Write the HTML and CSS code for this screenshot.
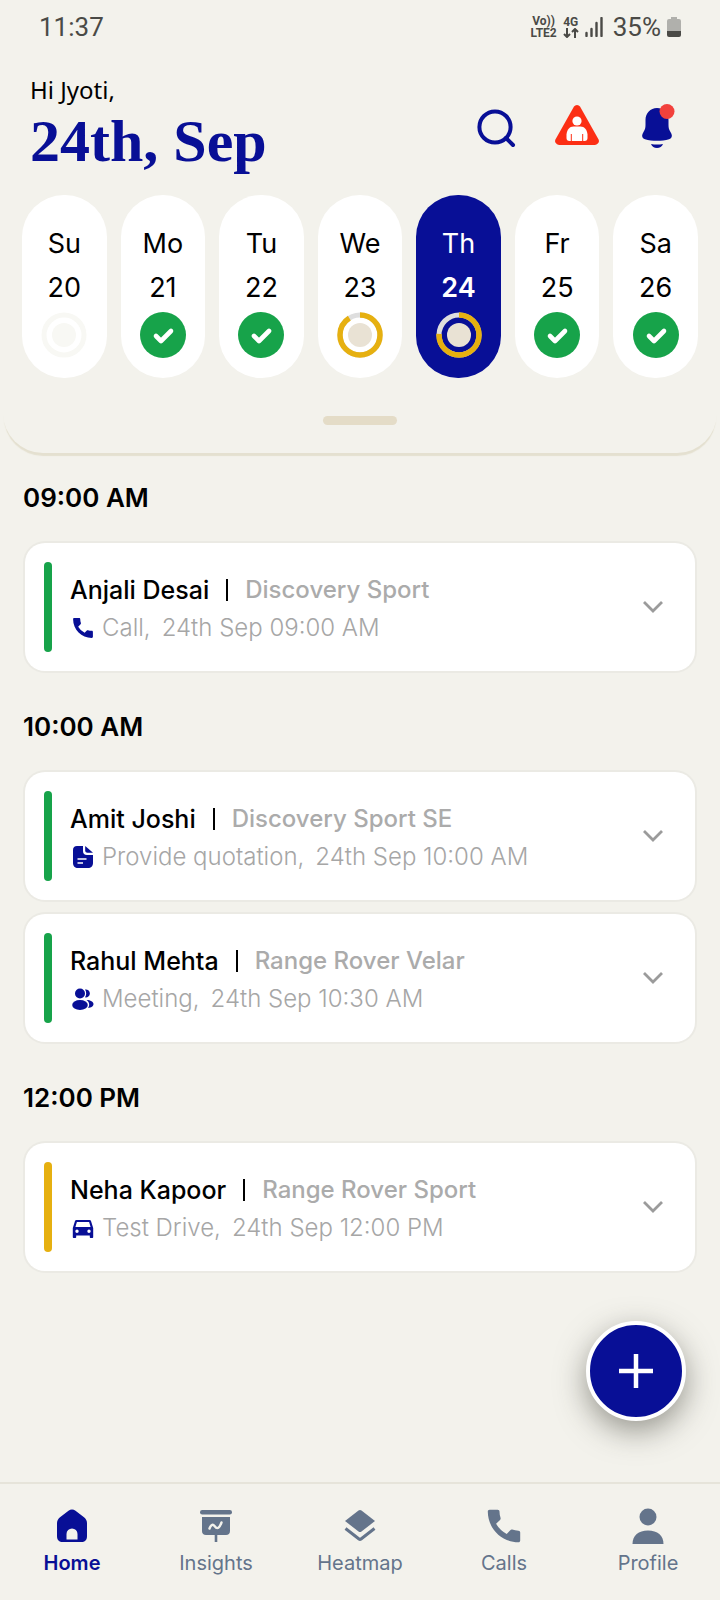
FILE: index.html
```
<!DOCTYPE html>
<html lang="en">
<head>
	<meta charset="UTF-8">
	<meta name="viewport" content="width=device-width, initial-scale=1.0">
	<title>Schedule</title>
	<link rel="stylesheet" href="styles.css">
</head>
<body>
	<svg width="0" height="0" class="sprite" aria-hidden="true">
		<symbol id="phone" viewBox="2 2 20 20"><path d="M3 4c0-.6.4-1 1-1h4.500c.6 0 1 .4 1 1 0 1.200.2 2.400.6 3.500.1.400 0 .8-.3 1.100L7.600 10.800a15 15 0 0 0 5.900 5.600l2-2.100c.3-.3.7-.4 1-.3 1.100.4 2.300.6 3.500.6.6 0 1 .4 1 1V20c0 .6-.4 1-1 1C10.600 21 3 13.400 3 4z"/></symbol>
		<symbol id="check" viewBox="0 0 46 46"><circle cx="23" cy="23" r="23"/><path d="M16 24l5 5 10-10" fill="none" stroke="#fff" stroke-width="4.600" stroke-linecap="round" stroke-linejoin="round"/></symbol>
		<symbol id="chevron" viewBox="0 0 20 12"><path d="M1 1l9 9 9-9" fill="none" stroke="currentColor" stroke-width="2.800"/></symbol>
	</svg>

	<header class="top">
		<div class="status-bar">
			<span class="clock">11:37</span>
			<div class="status-icons">
				<div class="stack"><span>Vo))</span><span>LTE2</span></div>
				<div class="stack">
					<span>4G</span>
					<svg width="16" height="10" viewBox="0 0 16 10"><path d="M4 0v9M1 6l3 3 3-3M12 10V1M9 4l3-3 3 3" fill="none" stroke="currentColor" stroke-width="2"/></svg>
				</div>
				<svg width="18" height="20" viewBox="0 0 18 20"><path d="M1.500 16v3M6.500 12v7M11.500 6v13M16.500 1v18" stroke="currentColor" stroke-width="2.400" stroke-linecap="round"/></svg>
				<span class="battery-text">35%</span>
				<svg width="14" height="20" viewBox="0 0 14 20"><path d="M4 0h6v2h2a2 2 0 0 1 2 2v10H0V4a2 2 0 0 1 2-2h2z" fill="#b0b0ac"/><path d="M0 14h14v4a2 2 0 0 1-2 2H2a2 2 0 0 1-2-2z" fill="#4a4a46"/></svg>
			</div>
		</div>

		<div class="greeting-row">
			<div>
				<p class="greeting">Hi Jyoti,</p>
				<h1>24th, Sep</h1>
			</div>
			<div class="actions">
				<button type="button" aria-label="Search">
					<svg width="44" height="44" viewBox="0 0 44 44"><g fill="none" stroke="#080f96" stroke-width="4" stroke-linecap="round"><circle cx="21" cy="23" r="15.600"/><path d="M32 34l7 7"/></g></svg>
				</button>
				<button type="button" aria-label="Emergency">
					<svg width="44" height="44" viewBox="0 0 44 44"><path d="M19 2.500a3.600 3.600 0 0 1 6 0L43 34.500a4 4 0 0 1-3.400 6.500H4.400A4 4 0 0 1 1 34.500z" fill="#fc2f14"/><g fill="#fff"><circle cx="22" cy="17" r="4.600"/><path d="M18.500 22.500h7c4 0 6.500 3 7 8v3.500c0 2-1 3-3 3h-15c-2 0-3-1-3-3v-3.500c.5-5 3-8 7-8z"/></g><path d="M16.300 30v7M27.700 30v7" stroke="#fc2f14" stroke-width="1"/></svg>
				</button>
				<button type="button" aria-label="Notifications">
					<svg width="44" height="44" viewBox="0 0 44 44"><g fill="#080f96"><path d="M21 4c6.600 0 11.500 5 11.500 12v5c0 3 .5 4.500 2 7l1 2c1 2.400 0 4.500-2.500 5.200-7 2-17 2-24 0C6.500 34.500 5.500 32.400 6.500 30l1-2c1.500-2.500 2-4 2-7v-5C9.500 9 14.400 4 21 4z"/><path d="M15 40c4 .7 8 .7 12 0-1 2.500-3.200 4-6 4s-5-1.500-6-4z"/></g><circle cx="31" cy="7.500" r="7.500" fill="#f2413c"/></svg>
				</button>
			</div>
		</div>

		<div class="week">
			<button type="button" class="day"><span>Su</span><span>20</span>
				<svg class="ring" viewBox="0 0 46 46"><circle cx="23" cy="23" r="20" fill="none" stroke="#f8f8f4" stroke-width="5"/><circle cx="23" cy="23" r="12" fill="#f8f8f4"/></svg>
			</button>
			<button type="button" class="day"><span>Mo</span><span>21</span><svg class="ring done"><use href="#check"/></svg></button>
			<button type="button" class="day"><span>Tu</span><span>22</span><svg class="ring done"><use href="#check"/></svg></button>
			<button type="button" class="day"><span>We</span><span>23</span>
				<svg class="ring" viewBox="0 0 46 46"><circle cx="23" cy="23" r="20" fill="none" stroke="#dedede" stroke-width="5"/><circle cx="23" cy="23" r="20" fill="none" stroke="#e6b010" stroke-width="5.500" pathLength="100" stroke-dasharray="91 9" transform="rotate(-90 23 23)"/><circle cx="23" cy="23" r="12" fill="#e9e2d4"/></svg>
			</button>
			<button type="button" class="day active" aria-current="date"><span>Th</span><span>24</span>
				<svg class="ring" viewBox="0 0 46 46"><circle cx="23" cy="23" r="20" fill="none" stroke="#dedede" stroke-width="5"/><circle cx="23" cy="23" r="20" fill="none" stroke="#e6b010" stroke-width="5.500" pathLength="100" stroke-dasharray="76 24" transform="rotate(-90 23 23)"/><circle cx="23" cy="23" r="12" fill="#e9e2d4"/></svg>
			</button>
			<button type="button" class="day"><span>Fr</span><span>25</span><svg class="ring done"><use href="#check"/></svg></button>
			<button type="button" class="day"><span>Sa</span><span>26</span><svg class="ring done"><use href="#check"/></svg></button>
		</div>
		<div class="handle"></div>
	</header>

	<main>
		<section>
			<h2>09:00 AM</h2>
			<article class="card">
				<div class="info">
					<h3>Anjali Desai <i></i> <span>Discovery Sport</span></h3>
					<p><svg width="24" height="24" viewBox="0 0 24 24"><use href="#phone" x="1" y="1" width="22" height="22"/></svg>Call, <time>24th Sep 09:00 AM</time></p>
				</div>
				<button type="button" aria-label="Expand"><svg width="20" height="12"><use href="#chevron"/></svg></button>
			</article>
		</section>

		<section>
			<h2>10:00 AM</h2>
			<article class="card">
				<div class="info">
					<h3>Amit Joshi <i></i> <span>Discovery Sport SE</span></h3>
					<p><svg width="24" height="24" viewBox="0 0 24 24"><path d="M6 1h6v5a4 4 0 0 0 4 4h6v8c0 3-2 5-5 5H7c-3 0-5-2-5-5V5c0-2.500 1.500-4 4-4z"/><path d="M14.200 1L22 7.800h-5.500c-1.300 0-2.300-1-2.300-2.300z"/><path d="M6.500 14h9M6.500 18h5.500" stroke="#fff" stroke-width="1.600"/></svg>Provide quotation, <time>24th Sep 10:00 AM</time></p>
				</div>
				<button type="button" aria-label="Expand"><svg width="20" height="12"><use href="#chevron"/></svg></button>
			</article>
			<article class="card">
				<div class="info">
					<h3>Rahul Mehta <i></i> <span>Range Rover Velar</span></h3>
					<p><svg width="24" height="24" viewBox="0 0 24 24"><circle cx="9" cy="6.500" r="5"/><ellipse cx="9" cy="18" rx="7.800" ry="5"/><path d="M14 2.500a4 4 0 1 1 0 7.800c1.600-2.200 1.600-5.600 0-7.800zM15.500 13c4 0 7 1.800 7 4s-2.300 3.800-5.500 4c2-2.600 1.500-5.800-1.500-8z"/></svg>Meeting, <time>24th Sep 10:30 AM</time></p>
				</div>
				<button type="button" aria-label="Expand"><svg width="20" height="12"><use href="#chevron"/></svg></button>
			</article>
		</section>

		<section>
			<h2>12:00 PM</h2>
			<article class="card pending">
				<div class="info">
					<h3>Neha Kapoor <i></i> <span>Range Rover Sport</span></h3>
					<p><svg width="24" height="24" viewBox="0 0 24 24"><path fill-rule="evenodd" d="M5.500 4h13c.8 0 1.300.4 1.500 1l2.200 7v9c0 .6-.4 1-1 1h-1.400c-.6 0-1-.4-1-1v-1.600H5.200V21c0 .6-.4 1-1 1H2.800c-.6 0-1-.4-1-1v-9L4 5c.2-.6.700-1 1.500-1zm.4 2L4.400 11h15.200L18.100 6zM6 13.500a1.700 1.700 0 1 0 0 3.400 1.700 1.700 0 0 0 0-3.400zm12 0a1.700 1.700 0 1 0 0 3.400 1.700 1.700 0 0 0 0-3.400z"/></svg>Test Drive, <time>24th Sep 12:00 PM</time></p>
				</div>
				<button type="button" aria-label="Expand"><svg width="20" height="12"><use href="#chevron"/></svg></button>
			</article>
		</section>
	</main>

	<button type="button" class="fab" aria-label="Add">
		<svg width="34" height="34" viewBox="0 0 34 34"><path d="M17 0v34M0 17h34" stroke="#fff" stroke-width="4.500"/></svg>
	</button>

	<nav class="bottom-nav">
		<a href="#" class="current">
			<svg width="36" height="36" viewBox="0 0 36 36"><path fill-rule="evenodd" d="M14.500 2.800c2.200-1.700 4.800-1.700 7 0l8.500 6.500c2 1.600 3 3.500 3 6V28c0 4-2 6-6 6H9c-4 0-6-2-6-6V15.300c0-2.500 1-4.400 3-6zM12.500 31.500h11V26a5.500 5.500 0 0 0-11 0z"/></svg>
			Home
		</a>
		<a href="#">
			<svg width="36" height="36" viewBox="0 0 36 36"><rect x="2" y="2" width="32" height="4.500" rx="2.200"/><path d="M4 9h28v14c0 2.500-1.500 4-4 4H8c-2.500 0-4-1.500-4-4z"/><path d="M18 26v8" stroke="currentColor" stroke-width="2.600"/><path d="M11.500 20.500c1-3 3-5 5-2.500 3 4 5 2 7-3.500" fill="none" stroke="#f3f2ec" stroke-width="2.400" stroke-linecap="round"/></svg>
			Insights
		</a>
		<a href="#">
			<svg width="36" height="36" viewBox="0 0 36 36"><path d="M16.500 2.500q1.500-1 3 0L33 13 19.500 23.500q-1.500 1-3 0L3 13z"/><path d="M3.500 20.500l13.500 10.500q1 .8 2 0l13.500-10.500" fill="none" stroke="currentColor" stroke-width="3"/></svg>
			Heatmap
		</a>
		<a href="#">
			<svg width="36" height="36"><use href="#phone"/></svg>
			Calls
		</a>
		<a href="#">
			<svg width="36" height="36" viewBox="0 0 36 36"><circle cx="18" cy="9" r="8.500"/><path d="M2.500 36c0-8.500 6-13.500 15.500-13.500S33.500 27.500 33.500 36z"/></svg>
			Profile
		</a>
	</nav>
</body>
</html>
```
FILE: styles.css
```
* {
	margin: 0;
	padding: 0;
	box-sizing: border-box;
}

body {
	min-height: 100vh;
	display: flex;
	flex-direction: column;
	background: #f3f2ec;
	color: #000;
	font-family: Inter, Roboto, "Liberation Sans", sans-serif;
}

button {
	border: none;
	background: none;
	font: inherit;
	color: inherit;
	cursor: pointer;
}

svg {
	display: block;
	flex-shrink: 0;
}

.sprite {
	position: absolute;
}

.top {
	margin: 0 3px;
	padding: 0 19px 28px;
	border-radius: 0 0 40px 40px;
	box-shadow: 0 4px 1px -1px #e4e0d0;
}

/* status bar */
.status-bar {
	height: 54px;
	padding: 0 17px;
	display: flex;
	justify-content: space-between;
	align-items: center;
	font-family: Roboto, sans-serif;
	font-size: 26px;
	font-weight: 400;
	color: #4a4a46;
}

.status-icons {
	display: flex;
	align-items: center;
	gap: 6px;
}

.stack {
	display: flex;
	flex-direction: column;
	align-items: center;
	font-size: 12px;
	line-height: 12px;
	font-weight: 700;
}

.battery-text {
	margin-left: 4px;
}

/* greeting */
.greeting-row {
	padding: 22px 18px 0 8px;
	display: flex;
	justify-content: space-between;
}

.greeting {
	font-family: "Noto Sans", sans-serif;
	font-size: 24px;
	line-height: 28px;
}

h1 {
	font-family: "Liberation Serif", serif;
	font-size: 60px;
	line-height: 74px;
	font-weight: 700;
	color: #080f96;
}

.actions {
	display: flex;
	gap: 37px;
	padding-top: 28px;
}

.actions button {
	height: 44px;
}

/* week strip */
.week {
	padding-top: 17px;
	display: grid;
	grid-template-columns: repeat(7, 1fr);
	gap: 14px;
}

.day {
	padding: 27px 0 20px;
	display: flex;
	flex-direction: column;
	align-items: center;
	border-radius: 42px;
	background: #fff;
	font-size: 27px;
	line-height: 44px;
}

.day.active {
	background: #080f96;
	color: #fff;
}

.day.active span + span {
	font-weight: 600;
}

.ring {
	width: 46px;
	height: 46px;
	margin-top: 2px;
}

.done {
	fill: #17a34a;
}

.handle {
	width: 74px;
	height: 9px;
	margin: 38px auto 0;
	border-radius: 5px;
	background: #e4dcc7;
}

/* schedule */
main {
	flex: 1;
	padding: 29px 25px 40px;
}

section {
	margin-bottom: 40px;
}

h2 {
	margin: 0 -2px 29px;
	font-size: 26px;
	line-height: 32px;
	font-weight: 600;
}

.card {
	height: 128px;
	padding: 19px 22px 19px 19px;
	display: flex;
	align-items: center;
	border-radius: 20px;
	background: #fff;
	box-shadow: 0 0 0 2px #ebeae4;
}

.card + .card {
	margin-top: 14px;
}

.card::before {
	content: '';
	width: 8px;
	height: 90px;
	border-radius: 4px;
	background: #17a34a;
}

.card.pending::before {
	background: #e6b010;
}

.info {
	flex: 1;
	padding-top: 4px;
	margin-left: 18px;
}

h3 {
	display: flex;
	align-items: center;
	font-size: 25px;
	line-height: 38px;
	font-weight: 500;
}

h3 i {
	width: 2px;
	height: 22px;
	margin: 0 17px;
	background: #000;
}

h3 span {
	font-size: 24px;
	color: #ababab;
}

.info p {
	display: flex;
	align-items: center;
	font-size: 24px;
	line-height: 38px;
	font-weight: 300;
	color: #a6a6a6;
}

.info p svg {
	margin: 0 7px 0 1px;
	fill: #080f96;
}

time {
	margin-left: 11px;
}

.card button {
	padding: 10px;
	color: #9b9b9b;
}

/* floating add button */
.fab {
	position: fixed;
	right: 34px;
	bottom: 179px;
	width: 100px;
	height: 100px;
	display: flex;
	align-items: center;
	justify-content: center;
	border: 4px solid #fff;
	border-radius: 50%;
	background: #080f96;
	box-shadow: 0 10px 30px rgba(60, 60, 50, 0.5);
}

/* bottom navigation */
.bottom-nav {
	position: sticky;
	bottom: 0;
	height: 118px;
	display: grid;
	grid-template-columns: repeat(5, 1fr);
	border-top: 2px solid #e6e4da;
	background: #f3f2ec;
}

.bottom-nav a {
	padding-bottom: 23px;
	display: flex;
	flex-direction: column;
	align-items: center;
	justify-content: flex-end;
	gap: 5px;
	font-size: 20px;
	line-height: 28px;
	color: #64748b;
	fill: currentColor;
	text-decoration: none;
}

.bottom-nav a.current {
	color: #080f96;
	font-weight: 600;
}
```
